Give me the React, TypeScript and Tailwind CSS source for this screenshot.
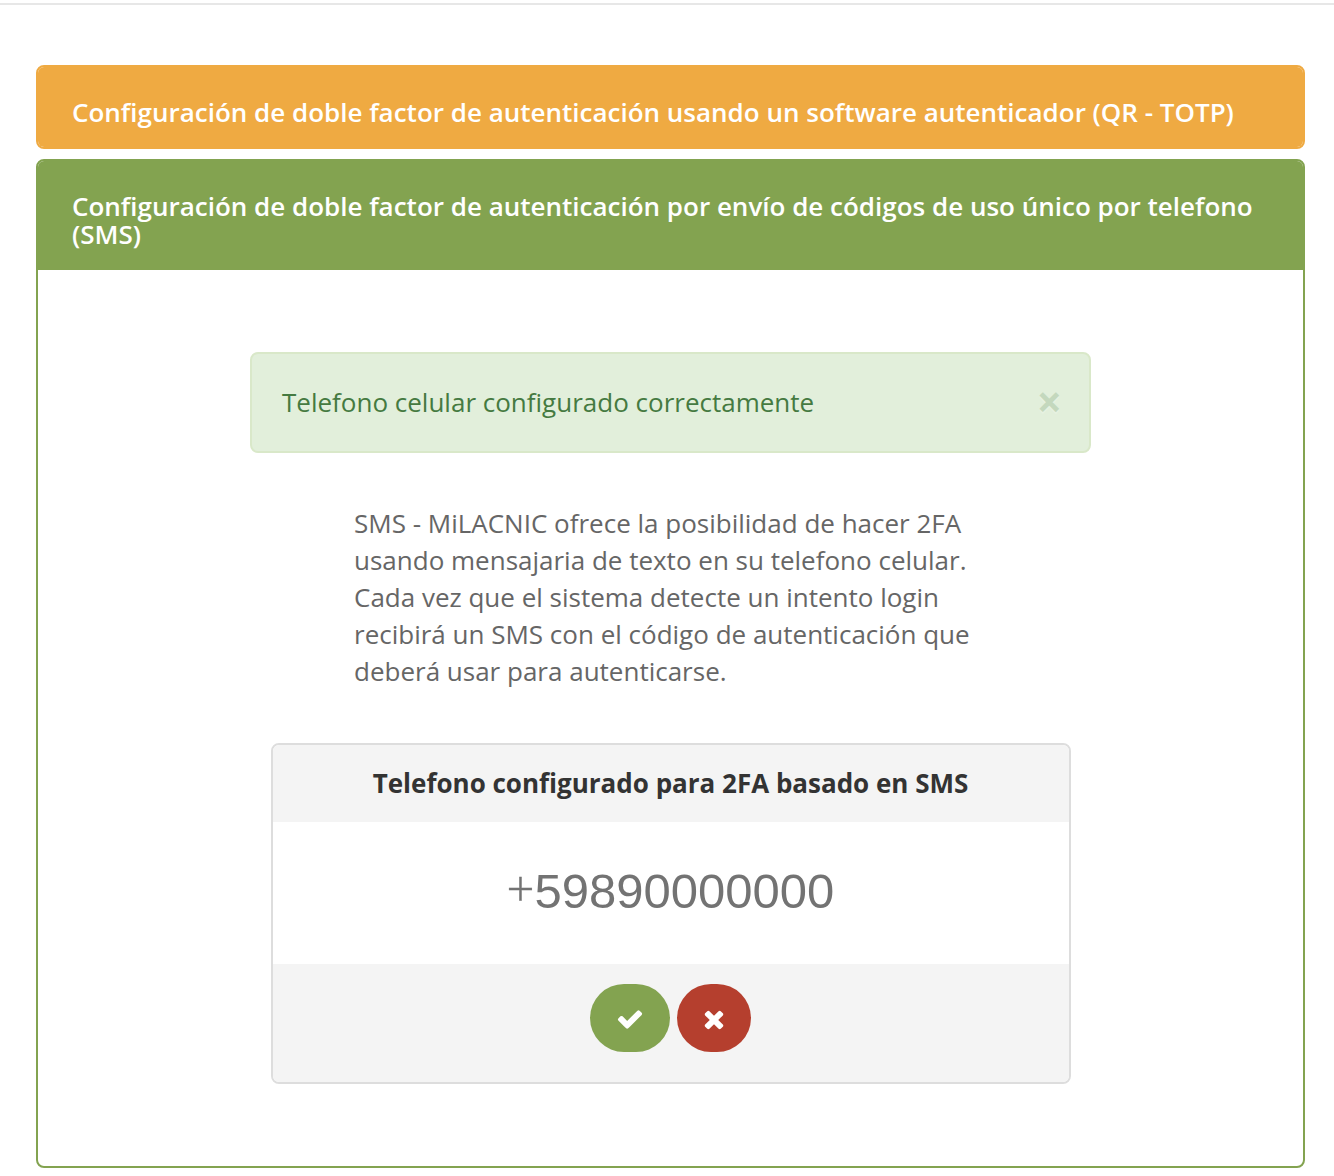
import { useState } from "react";

const CHECK_PATH =
  "M1671 566q0 40-28 68l-724 724-136 136q-28 28-68 28t-68-28l-136-136-362-362q-28-28-28-68t28-68l136-136q28-28 68-28t68 28l294 295 656-657q28-28 68-28t68 28l136 136q28 28 28 68z";
const TIMES_PATH =
  "M1490 1322q0 40-28 68l-136 136q-28 28-68 28t-68-28l-294-294-294 294q-28 28-68 28t-68-28l-136-136q-28-28-28-68t28-68l294-294-294-294q-28-28-28-68t28-68l136-136q28-28 68-28t68 28l294 294 294-294q28-28 68-28t68 28l136 136q28 28 28 68t-28 68l-294 294 294 294q28 28 28 68z";

function Icon({ path }: { path: string }) {
  return (
    <svg viewBox="0 0 1792 1792" className="size-7 fill-white" aria-hidden="true">
      <path d={path} />
    </svg>
  );
}

function SuccessAlert({ onClose }: { onClose: () => void }) {
  return (
    <div className="w-[841px] h-[101px] pl-[30px] pr-[27px] flex items-center justify-between rounded-lg border-2 border-[#d9e8c9] bg-[#e2efdb] text-[#457a41]">
      <span>Telefono celular configurado correctamente</span>
      <button
        onClick={onClose}
        aria-label="Cerrar"
        className="pb-1 text-[44px] leading-none font-bold text-[#c4d8bd] [text-shadow:0_2px_0_#e7f2e2]"
      >
        ×
      </button>
    </div>
  );
}

function PhoneCard() {
  return (
    <div className="w-[800px] h-[341px] mt-[53px] flex flex-col rounded-lg border-2 border-[#dddddd] overflow-hidden">
      <div className="h-[77px] flex items-center justify-center bg-[#f4f4f4] font-bold text-[#333333]">
        Telefono configurado para 2FA basado en SMS
      </div>
      <div className="h-[142px] pb-[3px] flex items-center justify-center text-[49px] leading-none text-[#737373]">
        <span className="pb-[7px] font-light [-webkit-text-stroke:0.4px_#737373]">+</span>
        <span className="font-['Liberation_Sans',sans-serif]">59890000000</span>
      </div>
      <div className="flex-1 pt-5 flex items-start justify-center gap-[7px] bg-[#f4f4f4]">
        <button
          aria-label="Confirmar"
          className="w-20 h-[68px] pt-0.5 flex items-center justify-center rounded-[34px] bg-[#83a350]"
        >
          <Icon path={CHECK_PATH} />
        </button>
        <button
          aria-label="Eliminar"
          className="w-[74px] h-[68px] pt-0.5 flex items-center justify-center rounded-[34px] bg-[#b53f2e]"
        >
          <Icon path={TIMES_PATH} />
        </button>
      </div>
    </div>
  );
}

export default function App() {
  const [showAlert, setShowAlert] = useState(true);

  return (
    <div className="h-[1176px] pt-[3px] bg-white font-['Open_Sans',sans-serif] text-[26px] leading-[37px] text-[#666666]">
      <div className="h-0.5 bg-[#e7e7e7]" />

      <div className="pt-[60px] pl-9 pr-[29px] flex flex-col gap-2.5">
        <section className="h-[84px] rounded-lg border-2 border-[#efaa42]">
          <h4 className="h-20 pt-[31px] px-[34px] rounded-md bg-[#efaa42] font-semibold leading-7 text-white">
            Configuración de doble factor de autenticación usando un software autenticador (QR - TOTP)
          </h4>
        </section>

        <section className="h-[1009px] rounded-lg border-2 border-[#83a350]">
          <h4 className="h-[109px] pt-[31px] px-[34px] rounded-t-md bg-[#83a350] font-semibold leading-7 text-white">
            Configuración de doble factor de autenticación por envío de códigos de uso único por telefono (SMS)
          </h4>
          <div className="pt-[82px] flex flex-col items-center">
            {showAlert && <SuccessAlert onClose={() => setShowAlert(false)} />}
            <p className="w-[633px] mt-[52px]">
              SMS - MiLACNIC ofrece la posibilidad de hacer 2FA usando mensajaria de texto en su telefono
              celular. Cada vez que el sistema detecte un intento login recibirá un SMS con el código de
              autenticación que deberá usar para autenticarse.
            </p>
            <PhoneCard />
          </div>
        </section>
      </div>
    </div>
  );
}
